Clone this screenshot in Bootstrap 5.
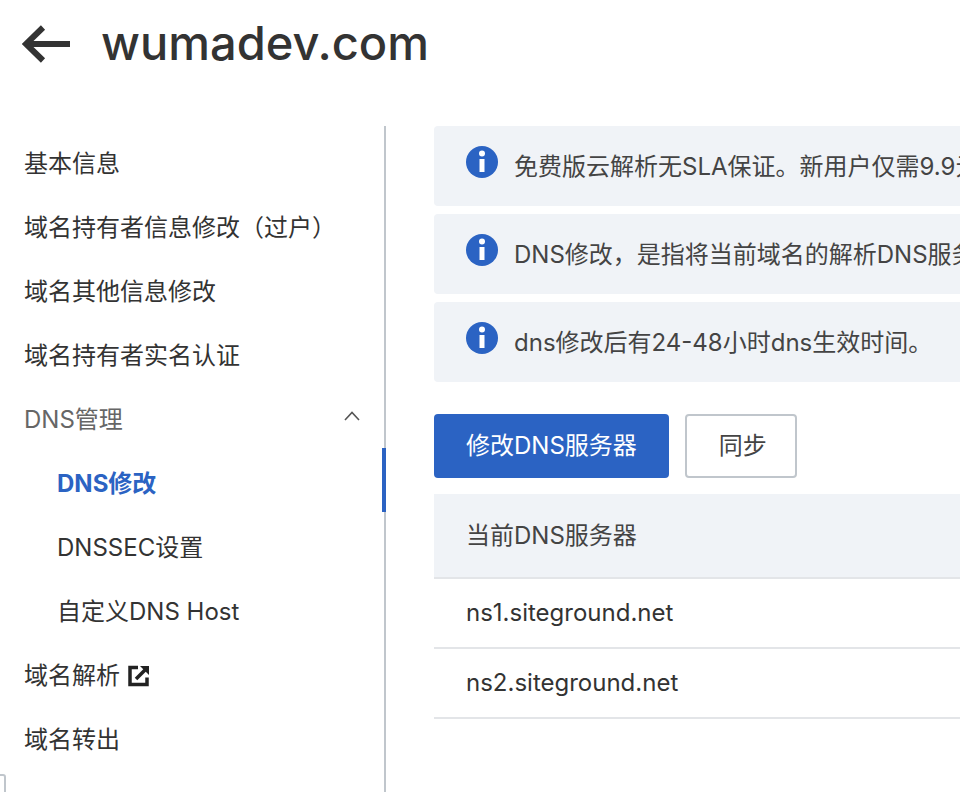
<!DOCTYPE html>
<html lang="zh-CN">
<head>
    <meta charset="UTF-8">
    <meta name="viewport" content="width=device-width, initial-scale=1.0">
    <title>wumadev.com</title>
    <link href="https://cdn.jsdelivr.net/npm/bootstrap@5.3.0/dist/css/bootstrap.min.css" rel="stylesheet">
    <style>
    html, body {
        height: 100%;
    }

    body {
        font-family: Inter, "Noto Sans CJK SC", sans-serif;
        font-size: 24px;
        color: #333;
        overflow: hidden;
        position: relative;
    }

    /* Header */
    .page-head {
        height: 88px;
        margin-bottom: 38px;
        padding-left: 22px;
        gap: 32px;
    }

    .page-title {
        font-size: 47px;
        font-weight: 500;
        line-height: 1;
        margin: 0 0 4px -1px;
        color: #333;
    }

    /* Sidebar */
    .side-menu {
        width: 386px;
        flex-shrink: 0;
        border-right: 2px solid #c0c6cc;
        padding-top: 6px;
    }

    .side-link {
        height: 64px;
        padding: 0 24px;
        color: #333;
        text-decoration: none;
        position: relative;
    }

    .side-group {
        color: #666;
    }

    .side-sub {
        padding-left: 57px;
    }

    .side-active {
        color: #2b63c3;
        font-weight: 700;
    }

    .side-active::after {
        content: "";
        position: absolute;
        top: -4px;
        right: -2px;
        width: 4px;
        height: 64px;
        background-color: #2b63c3;
    }

    /* Content */
    .content-pane {
        min-width: 0;
        padding-left: 48px;
        overflow: hidden;
    }

    .notice-box {
        height: 80px;
        margin-bottom: 8px;
        padding: 20px 0 0 32px;
        gap: 16px;
        background-color: #f0f3f7;
        border: 0;
        border-radius: 4px 0 0 4px;
        color: #444;
        white-space: nowrap;
    }

    .notice-text {
        line-height: 1;
        margin-top: 9px;
    }

    .action-bar {
        margin-top: 32px;
        margin-bottom: 16px;
        gap: 16px;
    }

    .action-btn {
        height: 64px;
        padding: 0 32px;
        font-size: 24px;
        border-radius: 4px;
    }

    .action-main {
        background-color: #2b63c3;
        border: 0;
        color: #fff;
    }

    .action-plain {
        padding: 0 28px 0 32px;
        background-color: #fff;
        border: 2px solid #c0c6cc;
        color: #444;
    }

    .dns-table {
        margin: 0;
    }

    .dns-table th {
        height: 84px;
        padding: 0 32px;
        vertical-align: middle;
        background-color: #f0f3f7;
        font-weight: 400;
        color: #444;
        border-bottom: 2px solid #e3e5e8;
    }

    .dns-table td {
        height: 70px;
        padding: 0 32px;
        vertical-align: middle;
        color: #333;
        border-bottom: 2px solid #e3e5e8;
    }

    /* Little widget cut off by the corner */
    .corner-tab {
        position: absolute;
        left: -8px;
        bottom: -10px;
        width: 14px;
        height: 28px;
        border: 2px solid #c0c6cc;
        border-radius: 3px;
        background-color: #fff;
    }
    </style>
</head>
<body class="d-flex flex-column">
    <header class="page-head d-flex align-items-center">
        <svg width="48" height="38" viewBox="0 0 48 38" class="flex-shrink-0">
            <path d="M48 19H5M21 2.500L4 19l17 16.500" fill="none" stroke="#333" stroke-width="6"/>
        </svg>
        <h1 class="page-title">wumadev.com</h1>
    </header>

    <div class="d-flex flex-grow-1">
        <nav class="side-menu nav flex-column">
            <a class="side-link d-flex align-items-center" href="#">基本信息</a>
            <a class="side-link d-flex align-items-center" href="#">域名持有者信息修改（过户）</a>
            <a class="side-link d-flex align-items-center" href="#">域名其他信息修改</a>
            <a class="side-link d-flex align-items-center" href="#">域名持有者实名认证</a>
            <a class="side-link side-group d-flex align-items-center justify-content-between" href="#">
                DNS管理
                <svg width="16" height="10" viewBox="0 0 16 10" class="me-0 mb-2">
                    <path d="M1 9l7-7.500L15 9" fill="none" stroke="#555" stroke-width="1.600"/>
                </svg>
            </a>
            <a class="side-link side-sub side-active d-flex align-items-center" href="#">DNS修改</a>
            <a class="side-link side-sub d-flex align-items-center" href="#">DNSSEC设置</a>
            <a class="side-link side-sub d-flex align-items-center" href="#">自定义DNS Host</a>
            <a class="side-link d-flex align-items-center gap-2" href="#">
                域名解析
                <svg width="22" height="22" viewBox="0 0 22 22">
                    <path d="M10 2.500H2v17h17v-7" fill="none" stroke="#222" stroke-width="3.500"/>
                    <path d="M8 14L17 5" fill="none" stroke="#222" stroke-width="3.500"/>
                    <path d="M12 1h9v9z" fill="#222"/>
                </svg>
            </a>
            <a class="side-link d-flex align-items-center" href="#">域名转出</a>
        </nav>

        <main class="content-pane flex-grow-1">
            <div class="notice-box alert d-flex align-items-start">
                <svg width="32" height="32" viewBox="0 0 32 32" class="flex-shrink-0">
                    <circle cx="16" cy="16" r="16" fill="#2b63c3"/>
                    <circle cx="16" cy="7.500" r="3" fill="#fff"/>
                    <rect x="13.500" y="13" width="5" height="13" fill="#fff"/>
                </svg>
                <span class="notice-text">免费版云解析无SLA保证。新用户仅需9.9元即可升级</span>
            </div>
            <div class="notice-box alert d-flex align-items-start">
                <svg width="32" height="32" viewBox="0 0 32 32" class="flex-shrink-0">
                    <circle cx="16" cy="16" r="16" fill="#2b63c3"/>
                    <circle cx="16" cy="7.500" r="3" fill="#fff"/>
                    <rect x="13.500" y="13" width="5" height="13" fill="#fff"/>
                </svg>
                <span class="notice-text">DNS修改，是指将当前域名的解析DNS服务器修改</span>
            </div>
            <div class="notice-box alert d-flex align-items-start">
                <svg width="32" height="32" viewBox="0 0 32 32" class="flex-shrink-0">
                    <circle cx="16" cy="16" r="16" fill="#2b63c3"/>
                    <circle cx="16" cy="7.500" r="3" fill="#fff"/>
                    <rect x="13.500" y="13" width="5" height="13" fill="#fff"/>
                </svg>
                <span class="notice-text">dns修改后有24-48小时dns生效时间。</span>
            </div>

            <div class="action-bar d-flex">
                <button type="button" class="btn action-btn action-main">修改DNS服务器</button>
                <button type="button" class="btn action-btn action-plain">同步</button>
            </div>

            <table class="table dns-table">
                <thead>
                    <tr><th>当前DNS服务器</th></tr>
                </thead>
                <tbody>
                    <tr><td>ns1.siteground.net</td></tr>
                    <tr><td>ns2.siteground.net</td></tr>
                </tbody>
            </table>
        </main>
    </div>

    <div class="corner-tab"></div>
</body>
</html>
